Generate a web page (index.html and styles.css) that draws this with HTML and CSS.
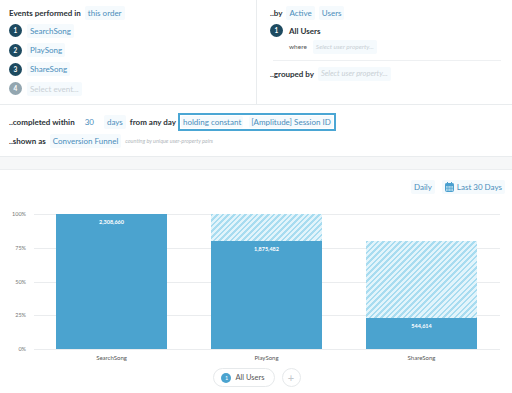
FILE: index.html
```html
<!DOCTYPE html>
<html>
<head>
<meta charset="utf-8">
<link rel="stylesheet" href="styles.css">
</head>
<body>
<div class="top">
  <div class="panel left">
    <div class="row head"><span class="lbl">Events performed in</span><span class="pill">this order</span></div>
    <div class="row step"><span class="num">1</span><span class="pill">SearchSong</span></div>
    <div class="row step"><span class="num">2</span><span class="pill">PlaySong</span></div>
    <div class="row step"><span class="num">3</span><span class="pill">ShareSong</span></div>
    <div class="row step"><span class="num off">4</span><span class="pill ph">Select event...</span></div>
  </div>
  <div class="panel right">
    <div class="row head"><span class="lbl">..by</span><span class="pill">Active</span><span class="pill">Users</span></div>
    <div class="row step"><span class="num">1</span><span class="seg">All Users</span></div>
    <div class="row where"><span class="wh">where</span><span class="pill ph">Select user property...</span></div>
    <div class="sep"></div>
    <div class="row group"><span class="lbl">..grouped by</span><span class="pill ph">Select user property...</span></div>
  </div>
</div>
<div class="opts">
  <div class="row orow">
    <span class="lbl">..completed within</span><span class="pill num30">30</span><span class="pill">days</span><span class="lbl">from any day</span>
    <span class="box"><span class="pill">holding constant</span><span class="pill">[Amplitude] Session ID</span></span>
  </div>
  <div class="row orow2">
    <span class="lbl">..shown as</span><span class="pill">Conversion Funnel</span><span class="note">counting by unique user-property pairs</span>
  </div>
</div>
<div class="band"></div>
<div class="chart-area">
  <div class="toolbar">
    <span class="pill">Daily</span>
    <span class="pill cal"><svg width="9" height="10" viewBox="0 0 9 10"><rect x="0.5" y="1.5" width="8" height="8" rx="1" fill="#a9d4ea" stroke="#4a9fcf"/><rect x="0.5" y="1.5" width="8" height="2.5" fill="#4a9fcf"/><rect x="2" y="0" width="1" height="2.5" fill="#4a9fcf"/><rect x="6" y="0" width="1" height="2.5" fill="#4a9fcf"/><path d="M3 4v5M6 4v5M1 6.3h7" stroke="#4a9fcf" stroke-width="0.6"/></svg>Last 30 Days</span>
  </div>
  <div class="chart">
    <div class="yaxis"><span>100%</span><span>75%</span><span>50%</span><span>25%</span><span>0%</span></div>
    <div class="plot">
      <div class="grid"><i></i><i></i><i></i><i></i><i></i></div>
      <div class="bars">
        <div class="bar"><div class="solid" style="height:135px"><span>2,308,660</span></div></div>
        <div class="bar"><div class="hatch" style="height:27px"></div><div class="solid" style="height:108px"><span>1,875,482</span></div></div>
        <div class="bar"><div class="hatch" style="height:77px"></div><div class="solid" style="height:31px"><span>544,614</span></div></div>
      </div>
    </div>
  </div>
  <div class="xlabels"><span>SearchSong</span><span>PlaySong</span><span>ShareSong</span></div>
  <div class="legend">
    <span class="lg"><span class="lnum">1</span>All Users</span>
    <span class="plus">+</span>
  </div>
</div>
</body>
</html>
```

FILE: styles.css
```css
* { box-sizing: border-box; }
html, body { margin: 0; padding: 0; background: #fff; }
body {
  font-family: Lato, "Open Sans", sans-serif;
  font-size: 8px;
  color: #333;
  width: 512px;
  height: 393px;
  overflow: hidden;
}
.top {
  display: flex;
  height: 105px;
  border-bottom: 1px solid #e9ecee;
}
.panel { padding: 5px 0 0 0; }
.left { width: 257px; border-right: 1px solid #e9ecee; padding-left: 9px; }
.right { flex: 1; padding-left: 13px; padding-right: 11px; }
.row { display: flex; align-items: center; }
.head { height: 16px; }
.step { height: 19.4px; }
.lbl { font-weight: bold; color: #2d3338; margin-right: 4px; white-space: nowrap; }
.pill {
  background: #f5fafd;
  color: #4a8dbb;
  padding: 2px 3px;
  border-radius: 2px;
  margin-right: 4px;
  white-space: nowrap;
  line-height: 10px;
}
.pill.ph { color: #c9d0d5; font-size: 6.5px; font-style: italic; }
.left .pill.ph { font-style: normal; font-size: 8px; }
.num {
  width: 13px; height: 13px;
  border-radius: 50%;
  background: #1d4a60;
  color: #fff;
  font-size: 6.5px;
  font-weight: bold;
  display: flex; align-items: center; justify-content: center;
  margin-right: 5px;
  flex: none;
}
.num.off { background: #93a6b0; }
.right .step .num { margin-right: 6px; }
.seg { font-weight: bold; color: #2d3338; }
.where { height: 13px; padding-left: 19px; }
.wh { color: #555; font-size: 6.5px; margin-right: 6px; }
.sep { height: 1px; background: #eef0f2; margin: 7px 0 4px 3px; }
.group { height: 18px; }
.group .pill.ph { font-size: 7.5px; }
.opts {
  height: 52px;
  padding: 8px 9px 0 9px;
  border-bottom: 1px solid #e9ecee;
}
.orow { height: 17px; }
.orow .lbl { margin-right: 6px; }
.num30 { background: transparent; margin-left: 1px; margin-right: 7px; }
.box {
  display: flex;
  border: 2px solid #4aa6d4;
  padding: 1px 1px;
  margin-left: -4px;
}
.box .pill { margin-right: 6px; padding: 1px 2px; }
.box .pill:last-child { margin-right: 0; }
.orow2 { height: 18px; margin-top: 2px; }
.note { color: #b3b8bc; font-style: italic; font-size: 5.5px; }
.band {
  height: 13px;
  background: #f6f7f8;
  border-bottom: 1px solid #eceef0;
}
.chart-area { padding-top: 10px; }
.toolbar {
  display: flex;
  justify-content: flex-end;
  padding-right: 7px;
  height: 14px;
  align-items: center;
}
.toolbar .pill { margin-right: 0; margin-left: 7px; font-size: 8px; }
.cal { display: flex; align-items: center; gap: 3px; }
.chart {
  display: flex;
  margin-top: 20px;
}
.yaxis {
  width: 34px;
  height: 136px;
  display: flex;
  flex-direction: column;
  justify-content: space-between;
  align-items: flex-end;
  padding-right: 8px;
  font-size: 5.5px;
  color: #777;
}
.yaxis span { height: 1px; line-height: 1px; }
.plot {
  width: 466px;
  height: 136px;
  display: grid;
}
.grid, .bars { grid-area: 1 / 1; }
.grid {
  display: flex;
  flex-direction: column;
  justify-content: space-between;
}
.grid i { display: block; height: 1px; background: #eaecee; }
.bars {
  display: flex;
  align-items: flex-end;
  gap: 44px;
  padding-left: 22px;
  padding-bottom: 1px;
}
.bar { width: 111px; display: flex; flex-direction: column; }
.solid {
  background: #4ba3cf;
  display: flex;
  justify-content: center;
  color: #fff;
  font-weight: bold;
  font-size: 5.5px;
  padding-top: 5px;
}
.hatch {
  background: repeating-linear-gradient(135deg, #a8dcf0 0 1.8px, #e2f4fb 1.8px 4px);
}
.xlabels {
  display: flex;
  padding-left: 56px;
  gap: 44px;
  margin-top: 4px;
  font-size: 6px;
  color: #555;
}
.xlabels span { width: 111px; text-align: center; }
.legend {
  display: flex;
  justify-content: center;
  align-items: center;
  gap: 7px;
  margin-top: 7px;
  padding-left: 2px;
}
.lg {
  display: flex;
  align-items: center;
  height: 19px;
  border: 1px solid #e6e9eb;
  border-radius: 10px;
  padding: 0 9px 0 7px;
  color: #555;
  font-size: 7.5px;
}
.lnum {
  width: 10px; height: 10px;
  border-radius: 50%;
  background: #4ba3cf;
  color: #fff;
  font-size: 5.5px;
  display: flex; align-items: center; justify-content: center;
  margin-right: 4px;
}
.plus {
  width: 19px; height: 19px;
  border-radius: 50%;
  border: 1px solid #e6e9eb;
  color: #c3c8cc;
  display: flex; align-items: center; justify-content: center;
  font-size: 11px;
}
```
